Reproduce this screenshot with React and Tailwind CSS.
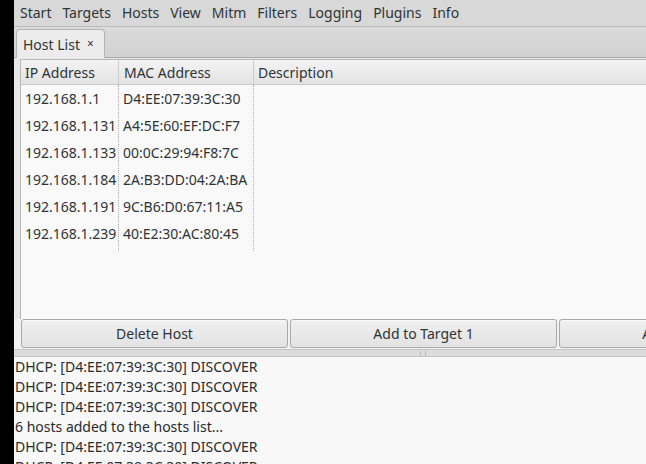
import React from 'react'

const menus = ['Start', 'Targets', 'Hosts', 'View', 'Mitm', 'Filters', 'Logging', 'Plugins', 'Info']

const hosts = [
  ['192.168.1.1', 'D4:EE:07:39:3C:30'],
  ['192.168.1.131', 'A4:5E:60:EF:DC:F7'],
  ['192.168.1.133', '00:0C:29:94:F8:7C'],
  ['192.168.1.184', '2A:B3:DD:04:2A:BA'],
  ['192.168.1.191', '9C:B6:D0:67:11:A5'],
  ['192.168.1.239', '40:E2:30:AC:80:45'],
]

const log = [
  'DHCP: [D4:EE:07:39:3C:30] DISCOVER',
  'DHCP: [D4:EE:07:39:3C:30] DISCOVER',
  'DHCP: [D4:EE:07:39:3C:30] DISCOVER',
  '6 hosts added to the hosts list...',
  'DHCP: [D4:EE:07:39:3C:30] DISCOVER',
  'DHCP: [D4:EE:07:39:3C:30] DISCOVER',
]

const Button = ({ label, className = '' }) => (
  <div className={`h-[29px] shrink-0 flex items-center justify-center rounded-[3px] border border-[#a9a9a9] bg-gradient-to-b from-[#f0f0f0] to-[#e2e2e2] shadow-[inset_0_1px_0_#fafafa] ${className}`}>
    {label}
  </div>
)

export default function App() {
  return (
    <div className="w-[646px] h-[464px] overflow-hidden flex bg-black text-[14px] text-[#2e3436]" style={{ fontFamily: '"Noto Sans", "DejaVu Sans", sans-serif' }}>
      <div className="w-[14px] shrink-0 bg-black" />
      <div className="flex-1 min-w-0 flex flex-col bg-[#d6d6d6]">
        {/* menu bar */}
        <div className="h-[27px] shrink-0 flex items-center gap-[11px] pl-[6px] bg-[#d8d8d8] border-b border-[#bcbcbc] leading-none">
          {menus.map((m) => (
            <span key={m}>{m}</span>
          ))}
        </div>

        {/* tab bar */}
        <div className="h-[31px] shrink-0 flex items-end pl-[2px] bg-gradient-to-b from-[#dadada] to-[#d2d2d2] border-b border-[#a8a8a8]">
          <div className="h-[29px] w-[89px] -mb-px flex items-center pl-[6px] gap-[7px] rounded-t-[4px] border border-b-0 border-[#b3b3b3] bg-[#ececec]">
            <span>Host List</span>
            <span className="text-[12px]">×</span>
          </div>
        </div>

        {/* notebook page */}
        <div className="h-[261px] shrink-0 flex pl-[6px] pt-[1px] bg-[#e8e8e8]">
          <div className="flex-1 flex flex-col border-l border-t border-[#b8b8b8] bg-[#f9f9f9]">
            <div className="h-[25px] shrink-0 flex bg-gradient-to-b from-[#f3f3f3] to-[#e3e3e3] border-b border-[#c8c8c8]">
              <div className="w-[98px] pl-[4px] flex items-center border-r border-[#cccccc]">IP Address</div>
              <div className="w-[135px] pl-[5px] flex items-center border-r border-[#cccccc]">MAC Address</div>
              <div className="flex-1 pl-[4px] flex items-center">Description</div>
            </div>
            <div className="flex">
              <div className="w-[98px] border-r border-dotted border-[#b0b0b0] pb-[4px]">
                {hosts.map(([ip]) => (
                  <div key={ip} className="h-[27px] flex items-center pl-[4px] whitespace-nowrap">{ip}</div>
                ))}
              </div>
              <div className="w-[135px] border-r border-dotted border-[#b0b0b0]">
                {hosts.map(([ip, mac]) => (
                  <div key={ip} className="h-[27px] flex items-center pl-[4px] whitespace-nowrap">{mac}</div>
                ))}
              </div>
            </div>
          </div>
        </div>

        {/* buttons */}
        <div className="h-[30px] shrink-0 flex items-start gap-[2px] pl-[7px] bg-[#f2f2f2]">
          <Button label="Delete Host" className="w-[267px]" />
          <Button label="Add to Target 1" className="w-[267px]" />
          <Button label="Add to Target 2" className="w-[267px]" />
        </div>

        {/* pane separator */}
        <div className="h-[8px] shrink-0 flex items-center justify-center bg-[#dcdcdc] border-t border-b border-[#c4c4c4]">
          <div className="w-[6px] h-[5px] border-x border-[#bdbdbd] ml-[186px]" />
        </div>

        {/* log */}
        <div className="flex-1 bg-[#f8f8f8] pl-px leading-[20px] text-[#2a2a2a]">
          {log.map((l, i) => (
            <div key={i} className="whitespace-nowrap">{l}</div>
          ))}
        </div>
      </div>
    </div>
  )
}
